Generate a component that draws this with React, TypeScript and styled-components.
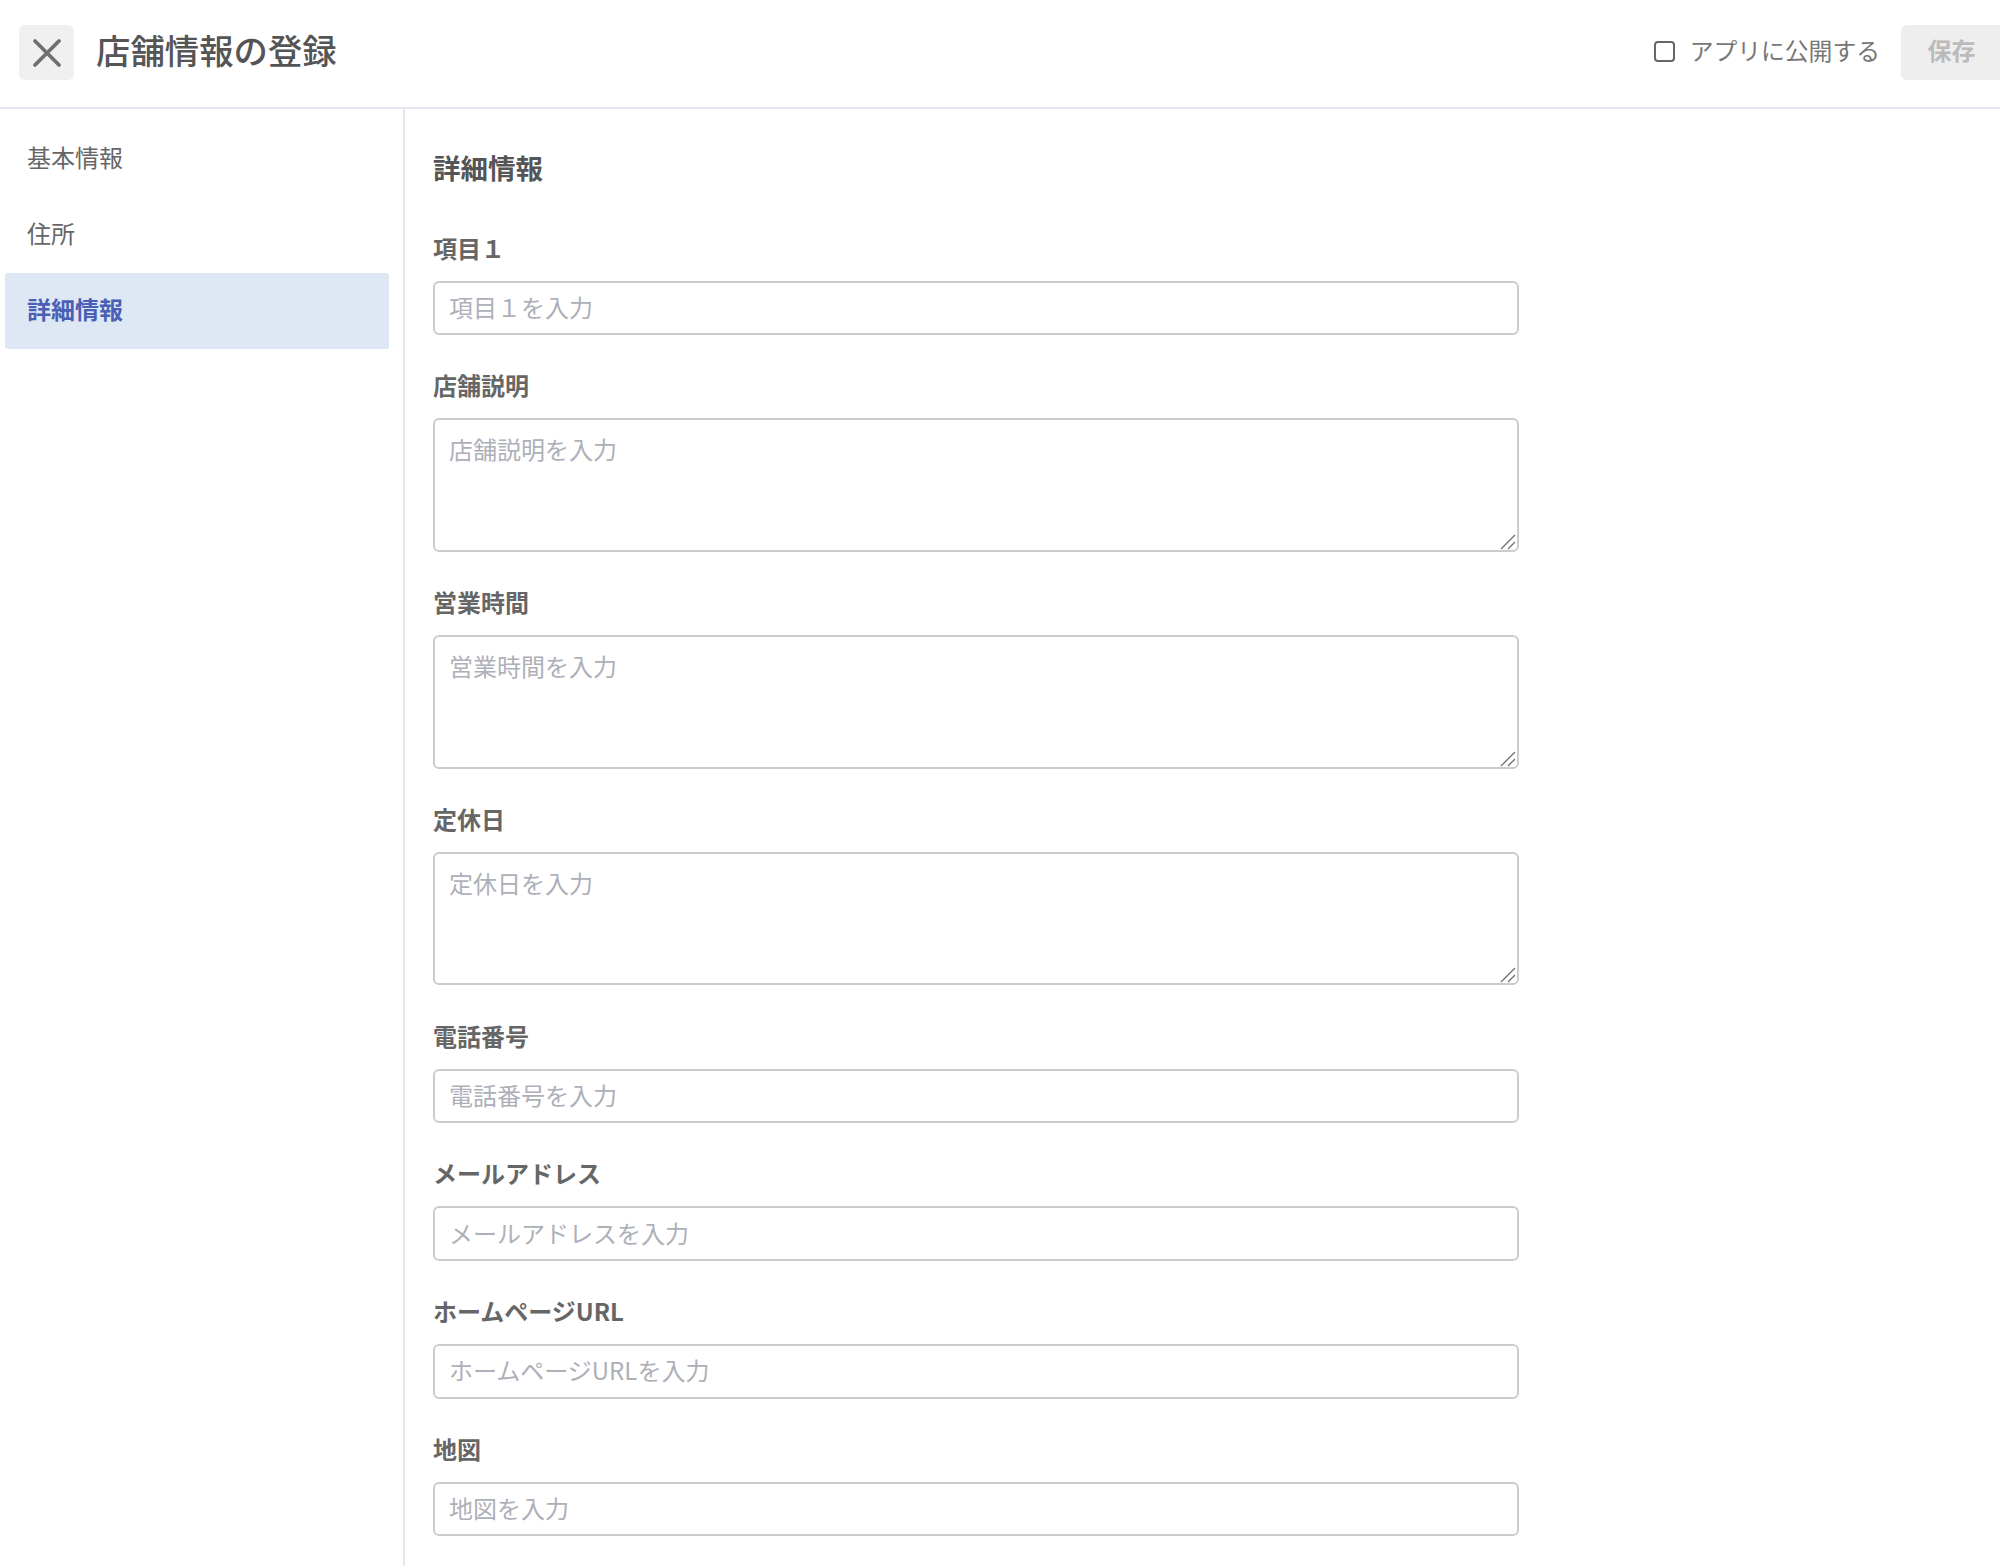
import React from "react";
import styled, { createGlobalStyle } from "styled-components";

const Global = createGlobalStyle`
  html, body { margin: 0; padding: 0; background: #fff; }
  body { font-family: "Noto Sans CJK JP", "Noto Sans", sans-serif; color: #555; overflow: hidden; }
  * { box-sizing: border-box; }
`;

const Page = styled.div`
  width: 2000px;
  height: 1566px;
  display: flex;
  flex-direction: column;
  overflow: hidden;
`;

const Header = styled.header`
  height: 109px;
  flex: none;
  display: flex;
  align-items: center;
  padding: 0 0 2px 19px;
  border-bottom: 2px solid #e7e7ef;
`;

const CloseButton = styled.button`
  width: 55px;
  height: 55px;
  padding: 0;
  border: 0;
  border-radius: 6px;
  background: #f0f0f0;
  display: flex;
  align-items: center;
  justify-content: center;
`;

const Title = styled.h1`
  margin: 0 0 0 22px;
  padding-bottom: 7px;
  font-size: 34.4px;
  line-height: 1;
  font-weight: 500;
  color: #555;
  flex: 1;
`;

const PublishLabel = styled.label`
  display: flex;
  align-items: center;
  gap: 15px;
  padding-bottom: 6px;
  font-size: 23.8px;
  color: #777;
  margin-right: 21px;
`;

const Check = styled.input`
  appearance: none;
  width: 21px;
  height: 21px;
  margin: 3px 0 0;
  border: 2px solid #666;
  border-radius: 4px;
  background: #fff;
`;

const SaveButton = styled.button`
  width: 99px;
  height: 55px;
  border: 0;
  border-radius: 6px 0 0 6px;
  background: #eee;
  color: #bbb;
  font: 700 24px "Noto Sans CJK JP", sans-serif;
  padding: 0 0 6px 2px;
`;

const Body = styled.div`
  flex: 1;
  display: flex;
  min-height: 0;
`;

const Sidebar = styled.nav`
  width: 405px;
  flex: none;
  padding: 12px 14px 0 5px;
  border-right: 2px solid #e7e7ef;
  display: flex;
  flex-direction: column;
`;

const NavItem = styled.a<{ $active?: boolean }>`
  height: 76px;
  display: flex;
  align-items: center;
  padding: 0 0 5px 22px;
  font-size: 24px;
  border-radius: 3px;
  color: ${(p) => (p.$active ? "#4a5fb5" : "#666")};
  font-weight: ${(p) => (p.$active ? 700 : 400)};
  background: ${(p) => (p.$active ? "#dee7f4" : "transparent")};
`;

const Main = styled.main`
  flex: 1;
  padding: 38px 0 0 28px;
`;

const SectionTitle = styled.h2`
  margin: 0 0 41.5px;
  font-size: 27.5px;
  line-height: 40px;
  font-weight: 700;
  color: #555;
`;

const Fields = styled.div`
  width: 1086px;
  display: flex;
  flex-direction: column;
  gap: 31.25px;
`;

const Field = styled.div`
  display: flex;
  flex-direction: column;
  gap: 14px;
`;

const Label = styled.label`
  font-size: 24px;
  line-height: 38px;
  height: 38px;
  font-weight: 700;
  color: #666;
`;

const controlStyles = `
  display: block;
  width: 100%;
  padding: 0 14px;
  border: 2px solid #ccc;
  border-radius: 6px;
  background: #fff;
  font: 400 24px "Noto Sans CJK JP", sans-serif;
  color: #555;
  outline: none;
  &::placeholder { color: #adb0b8; opacity: 1; }
`;

const TextInput = styled.input`
  ${controlStyles}
  height: 54.5px;
  padding-bottom: 3px;
`;

const TextAreaWrap = styled.div`
  position: relative;
  height: 133.5px;
`;

const TextArea = styled.textarea`
  ${controlStyles}
  height: 100%;
  padding-top: 13px;
  line-height: 32px;
  resize: none;
`;

const Grip = styled.svg`
  position: absolute;
  right: 3px;
  bottom: 2px;
  pointer-events: none;
`;

const fields: { label: string; multi?: boolean }[] = [
  { label: "項目１" },
  { label: "店舗説明", multi: true },
  { label: "営業時間", multi: true },
  { label: "定休日", multi: true },
  { label: "電話番号" },
  { label: "メールアドレス" },
  { label: "ホームページURL" },
  { label: "地図" },
];

export default function App() {
  return (
    <Page>
      <Global />
      <Header>
        <CloseButton aria-label="閉じる">
          <svg width="30" height="30" viewBox="0 0 30 30" fill="none" stroke="#707070" strokeWidth="3.8" strokeLinecap="round">
            <path d="M3 3 L27 27 M27 3 L3 27" />
          </svg>
        </CloseButton>
        <Title>店舗情報の登録</Title>
        <PublishLabel>
          <Check type="checkbox" />
          アプリに公開する
        </PublishLabel>
        <SaveButton disabled>保存</SaveButton>
      </Header>
      <Body>
        <Sidebar>
          <NavItem>基本情報</NavItem>
          <NavItem>住所</NavItem>
          <NavItem $active>詳細情報</NavItem>
        </Sidebar>
        <Main>
          <SectionTitle>詳細情報</SectionTitle>
          <Fields>
            {fields.map((f) => (
              <Field key={f.label}>
                <Label>{f.label}</Label>
                {f.multi ? (
                  <TextAreaWrap>
                    <TextArea placeholder={`${f.label}を入力`} />
                    <Grip width="16" height="16" viewBox="0 0 16 16" fill="none" stroke="#6e6e6e" strokeWidth="1.3">
                      <path d="M1 15 L15 1 M8 15 L15 8" />
                    </Grip>
                  </TextAreaWrap>
                ) : (
                  <TextInput placeholder={`${f.label}を入力`} />
                )}
              </Field>
            ))}
          </Fields>
        </Main>
      </Body>
    </Page>
  );
}
